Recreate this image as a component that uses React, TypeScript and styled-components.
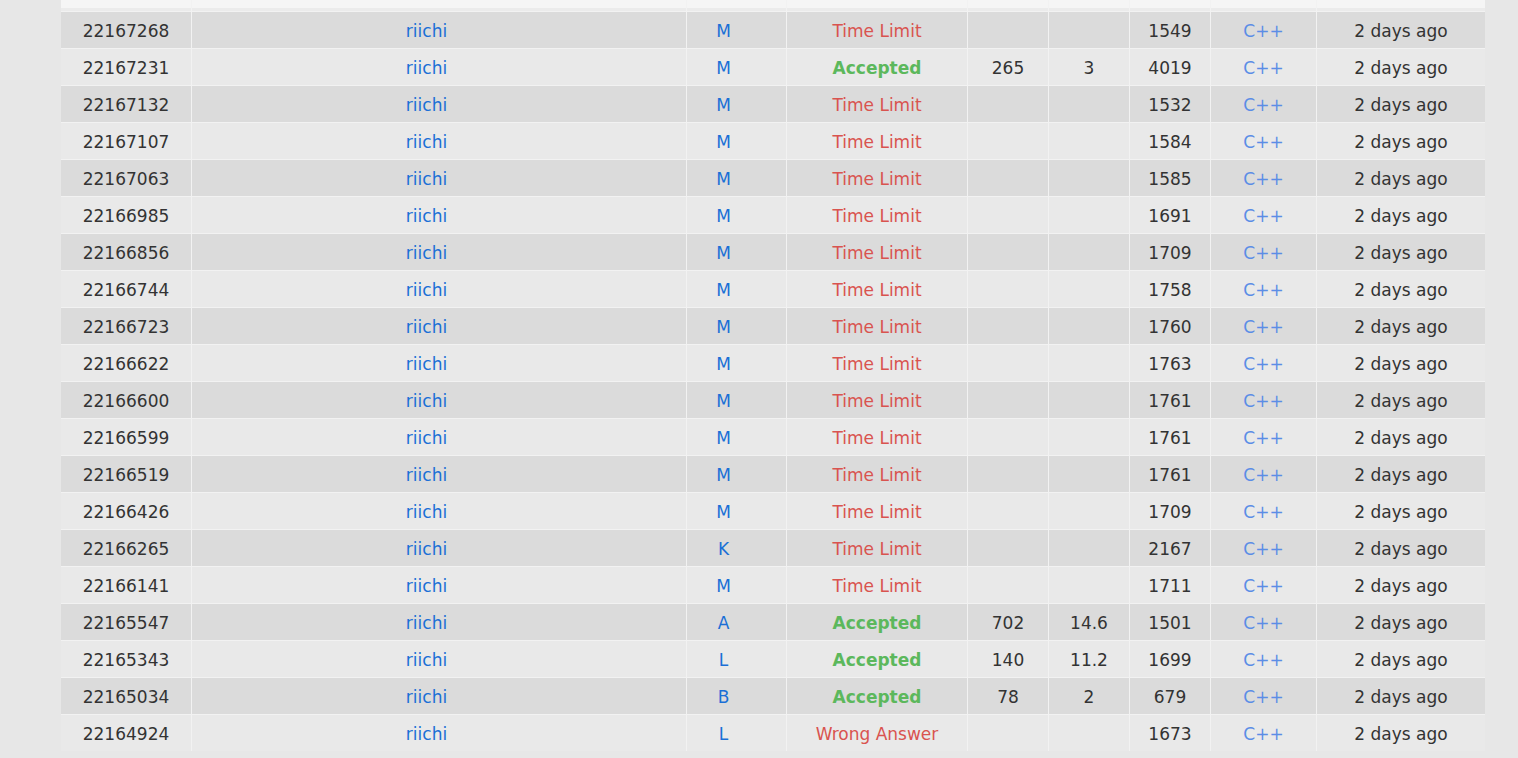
import styled, { createGlobalStyle } from 'styled-components';

const GlobalStyle = createGlobalStyle`
  body {
    margin: 0;
    background: #e7e7e7;
    font-family: 'DejaVu Sans', Verdana, sans-serif;
    font-size: 17px;
    color: #333333;
  }
`;

const COLUMNS = '130px 494px 99px 180px 80px 80px 80px 105px 168px';

const Page = styled.div`
  padding-left: 61px;
  height: 758px;
  overflow: hidden;
`;

const Table = styled.div`
  display: flex;
  flex-direction: column;
  gap: 1px;
  width: 1424px;
  background: #f2f2f2;
`;

const Row = styled.div`
  display: grid;
  grid-template-columns: ${COLUMNS};
  column-gap: 1px;
`;

const HeadCell = styled.div`
  height: 11px;
  background: #f5f5f5;
  box-shadow: inset 0 -3px 0 #ebebeb;
`;

const Cell = styled.div<{ $dark: boolean; $shift?: number }>`
  box-sizing: border-box;
  height: 36px;
  padding-top: 2px;
  display: flex;
  align-items: center;
  justify-content: center;
  padding-right: ${(p) => p.$shift ?? 0}px;
  background: ${(p) => (p.$dark ? '#dbdbdb' : '#e9e9e9')};
  white-space: nowrap;
`;

const Link = styled.span<{ $light?: boolean }>`
  color: ${(p) => (p.$light ? '#5b8de6' : '#1a6fd6')};
`;

const Verdict = styled.span<{ $ok: boolean }>`
  color: ${(p) => (p.$ok ? '#5cb85c' : '#d9534f')};
  font-weight: ${(p) => (p.$ok ? 700 : 400)};
`;

type Submission = {
  id: string;
  problem: string;
  verdict: string;
  time?: string;
  score?: string;
  length: string;
};

const rows: Submission[] = [
  { id: '22167268', problem: 'M', verdict: 'Time Limit', length: '1549' },
  { id: '22167231', problem: 'M', verdict: 'Accepted', time: '265', score: '3', length: '4019' },
  { id: '22167132', problem: 'M', verdict: 'Time Limit', length: '1532' },
  { id: '22167107', problem: 'M', verdict: 'Time Limit', length: '1584' },
  { id: '22167063', problem: 'M', verdict: 'Time Limit', length: '1585' },
  { id: '22166985', problem: 'M', verdict: 'Time Limit', length: '1691' },
  { id: '22166856', problem: 'M', verdict: 'Time Limit', length: '1709' },
  { id: '22166744', problem: 'M', verdict: 'Time Limit', length: '1758' },
  { id: '22166723', problem: 'M', verdict: 'Time Limit', length: '1760' },
  { id: '22166622', problem: 'M', verdict: 'Time Limit', length: '1763' },
  { id: '22166600', problem: 'M', verdict: 'Time Limit', length: '1761' },
  { id: '22166599', problem: 'M', verdict: 'Time Limit', length: '1761' },
  { id: '22166519', problem: 'M', verdict: 'Time Limit', length: '1761' },
  { id: '22166426', problem: 'M', verdict: 'Time Limit', length: '1709' },
  { id: '22166265', problem: 'K', verdict: 'Time Limit', length: '2167' },
  { id: '22166141', problem: 'M', verdict: 'Time Limit', length: '1711' },
  { id: '22165547', problem: 'A', verdict: 'Accepted', time: '702', score: '14.6', length: '1501' },
  { id: '22165343', problem: 'L', verdict: 'Accepted', time: '140', score: '11.2', length: '1699' },
  { id: '22165034', problem: 'B', verdict: 'Accepted', time: '78', score: '2', length: '679' },
  { id: '22164924', problem: 'L', verdict: 'Wrong Answer', length: '1673' },
];

export default function App() {
  return (
    <Page>
      <GlobalStyle />
      <Table>
        <Row>
          {Array.from({ length: 9 }).map((_, i) => (
            <HeadCell key={i} />
          ))}
        </Row>
        {rows.map((r, i) => {
          const dark = i % 2 === 0;
          return (
            <Row key={r.id}>
              <Cell $dark={dark}>{r.id}</Cell>
              <Cell $dark={dark} $shift={25}>
                <Link>riichi</Link>
              </Cell>
              <Cell $dark={dark} $shift={26}>
                <Link>{r.problem}</Link>
              </Cell>
              <Cell $dark={dark}>
                <Verdict $ok={r.verdict === 'Accepted'}>{r.verdict}</Verdict>
              </Cell>
              <Cell $dark={dark}>{r.time}</Cell>
              <Cell $dark={dark}>{r.score}</Cell>
              <Cell $dark={dark}>{r.length}</Cell>
              <Cell $dark={dark}>
                <Link $light>C++</Link>
              </Cell>
              <Cell $dark={dark}>2 days ago</Cell>
            </Row>
          );
        })}
      </Table>
    </Page>
  );
}
